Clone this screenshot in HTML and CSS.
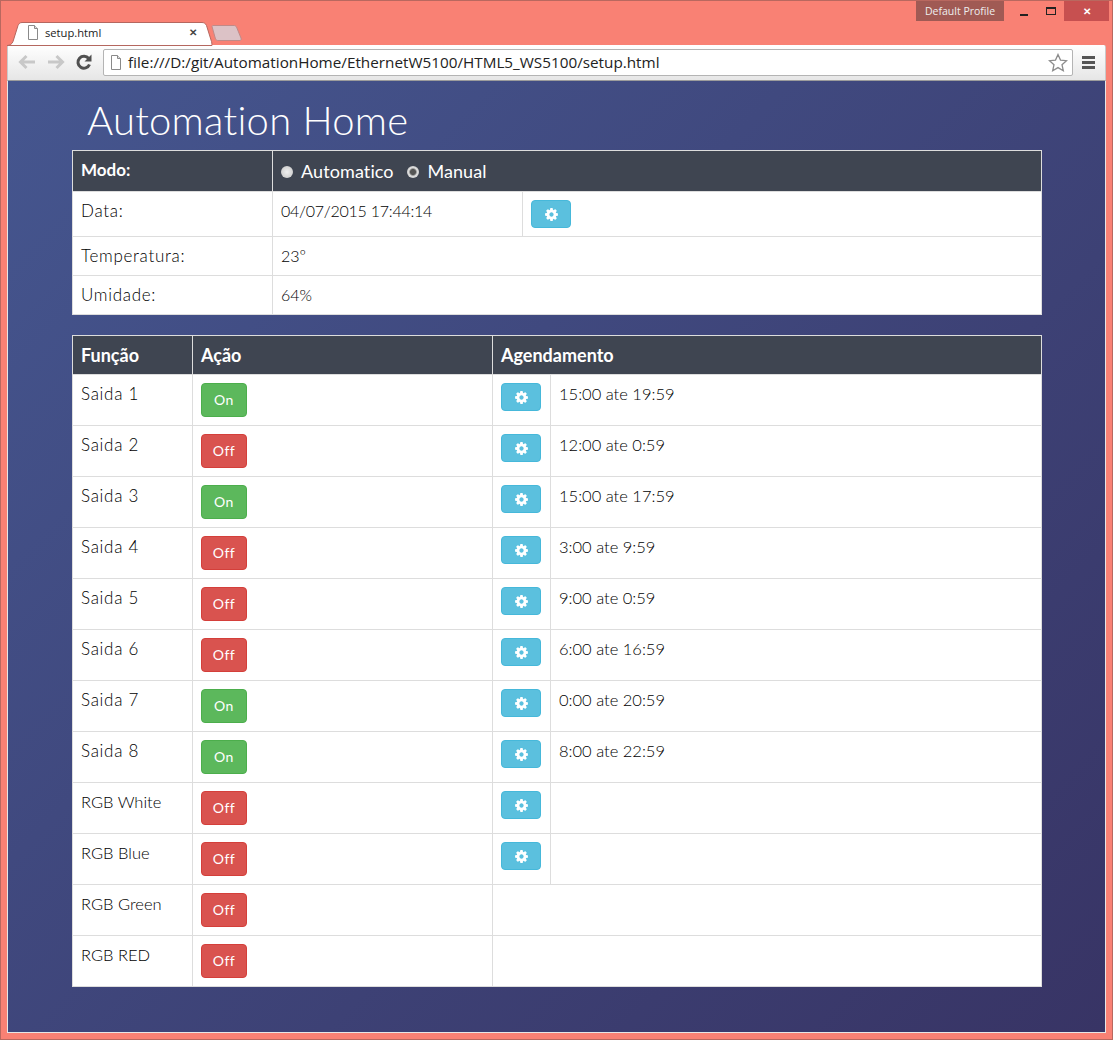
FILE: index.html
```html
<!DOCTYPE html>
<html lang="pt">
<head>
    <meta charset="UTF-8">
    <title>setup.html</title>
    <link rel="stylesheet" href="styles.css">
</head>
<body>
<svg class="defs" width="0" height="0">
    <symbol id="cog" viewBox="0 0 1792 1792">
        <path fill="currentColor" d="M1152 896q0-106-75-181t-181-75-181 75-75 181 75 181 181 75 181-75 75-181zm512-109v222q0 12-8 23t-20 13l-185 28q-19 54-39 91 35 50 107 138 10 12 10 25t-9 23q-27 37-99 108t-94 71q-12 0-26-9l-138-108q-44 23-91 38-16 136-29 186-7 28-36 28h-222q-14 0-24.5-8.5t-11.5-21.5l-28-184q-49-16-90-37l-141 107q-10 9-25 9-14 0-25-11-126-114-165-168-7-10-7-23 0-12 8-23 15-21 51-66.5t54-70.5q-27-50-41-99l-183-27q-13-2-21-12.5t-8-23.5v-222q0-12 8-23t19-13l186-28q14-46 39-92-40-57-107-138-10-12-10-24 0-10 9-23 26-36 98.5-107.5t94.5-71.5q13 0 26 10l138 107q44-23 91-38 16-136 29-186 7-28 36-28h222q14 0 24.5 8.5t11.5 21.5l28 184q49 16 90 37l142-107q9-9 24-9 13 0 25 10 129 119 165 170 7 8 7 22 0 12-8 23-15 21-51 66.5t-54 70.5q26 50 41 98l183 28q13 2 21 12.5t8 23.5z"/>
    </symbol>
    <symbol id="file" viewBox="0 0 12 15">
        <path fill="#fff" stroke="#8a8a8a" d="M1.5.5h6l3 3v11h-9z"/>
        <path fill="#e2e2e2" stroke="#8a8a8a" d="M7.5.5v3h3"/>
    </symbol>
</svg>
<div class="window">
    <div class="titlebar">
        <div class="tab">
            <svg class="tab-shape" width="206" height="26" viewBox="0 0 206 26">
                <path fill="#fff" stroke="#b5675f" d="M0 25.500c3 0 5-1.500 6-4l5-16c1-2 2-3 4-3h180c2 0 3.500 1 4.500 3l5 16c.5 2 .5 4 .5 4z"/>
            </svg>
            <svg class="tab-icon" width="12" height="15"><use href="#file"/></svg>
            <span class="tab-title">setup.html</span>
            <span class="tab-close">&#10005;</span>
        </div>
        <svg class="new-tab" width="32" height="16" viewBox="0 0 32 16">
            <path fill="#dcc2c6" stroke="#c08a88" d="M1 1.500c0-.5.500-1 1-1h21c1 0 2 .5 2.500 1.500l4.500 11c.5 1.500 0 2.500-1 2.500h-22c-1 0-2-.5-2.500-1.500z"/>
        </svg>
        <div class="spacer"></div>
        <div class="profile">Default Profile</div>
        <div class="controls">
            <span class="ctl ctl-min"><i></i></span>
            <span class="ctl ctl-max"><i></i></span>
            <span class="ctl ctl-close">&#10005;</span>
        </div>
    </div>

    <div class="toolbar">
        <svg class="nav" width="20" height="16" viewBox="0 0 20 16">
            <path fill="none" stroke="#c8c8c8" stroke-width="3" d="M18 8H4M9.500 2 3.500 8l6 6"/>
        </svg>
        <svg class="nav" width="20" height="16" viewBox="0 0 20 16">
            <path fill="none" stroke="#c8c8c8" stroke-width="3" d="M2 8h14M10.500 2l6 6-6 6"/>
        </svg>
        <svg class="nav reload" width="18" height="18" viewBox="0 0 18 18">
            <path fill="none" stroke="#505050" stroke-width="3" d="M14.500 11.500a6 6 0 1 1-.8-6"/>
            <path fill="#505050" d="M16.500 1.500v7h-7z"/>
        </svg>
        <div class="address">
            <svg class="addr-icon" width="12" height="15"><use href="#file"/></svg>
            <span class="url">file:///D:/git/AutomationHome/EthernetW5100/HTML5_WS5100/setup.html</span>
            <svg class="star" width="20" height="19" viewBox="0 0 20 19">
                <path fill="#fff" stroke="#8c8c8c" stroke-width="1.300" d="m10 1.500 2.500 5.600 6 .6-4.500 4 1.300 6L10 14.600l-5.300 3.100 1.300-6-4.500-4 6-.6z"/>
            </svg>
        </div>
        <div class="menu"><i></i><i></i><i></i></div>
    </div>

    <div class="page">
        <h1 class="title">Automation Home</h1>

        <table class="grid status">
            <colgroup><col class="c200"><col class="c250"><col></colgroup>
            <tr class="head">
                <th>Modo:</th>
                <td colspan="2" class="modes">
                    <span class="radio"></span><span class="mode">Automatico</span>
                    <span class="radio checked"></span><span class="mode">Manual</span>
                </td>
            </tr>
            <tr>
                <td>Data:</td>
                <td class="date">04/07/2015 17:44:14</td>
                <td><button class="btn info"><svg class="cog"><use href="#cog"/></svg></button></td>
            </tr>
            <tr>
                <td>Temperatura:</td>
                <td colspan="2">23º</td>
            </tr>
            <tr>
                <td>Umidade:</td>
                <td colspan="2">64%</td>
            </tr>
        </table>

        <table class="grid outputs">
            <colgroup><col class="c120"><col class="c300"><col class="c58"><col></colgroup>
            <tr class="head">
                <th>Função</th>
                <th>Ação</th>
                <th colspan="2">Agendamento</th>
            </tr>
            <tr>
                <td>Saida 1</td>
                <td><button class="btn on">On</button></td>
                <td><button class="btn info"><svg class="cog"><use href="#cog"/></svg></button></td>
                <td class="time">15:00 ate 19:59</td>
            </tr>
            <tr>
                <td>Saida 2</td>
                <td><button class="btn off">Off</button></td>
                <td><button class="btn info"><svg class="cog"><use href="#cog"/></svg></button></td>
                <td class="time">12:00 ate 0:59</td>
            </tr>
            <tr>
                <td>Saida 3</td>
                <td><button class="btn on">On</button></td>
                <td><button class="btn info"><svg class="cog"><use href="#cog"/></svg></button></td>
                <td class="time">15:00 ate 17:59</td>
            </tr>
            <tr>
                <td>Saida 4</td>
                <td><button class="btn off">Off</button></td>
                <td><button class="btn info"><svg class="cog"><use href="#cog"/></svg></button></td>
                <td class="time">3:00 ate 9:59</td>
            </tr>
            <tr>
                <td>Saida 5</td>
                <td><button class="btn off">Off</button></td>
                <td><button class="btn info"><svg class="cog"><use href="#cog"/></svg></button></td>
                <td class="time">9:00 ate 0:59</td>
            </tr>
            <tr>
                <td>Saida 6</td>
                <td><button class="btn off">Off</button></td>
                <td><button class="btn info"><svg class="cog"><use href="#cog"/></svg></button></td>
                <td class="time">6:00 ate 16:59</td>
            </tr>
            <tr>
                <td>Saida 7</td>
                <td><button class="btn on">On</button></td>
                <td><button class="btn info"><svg class="cog"><use href="#cog"/></svg></button></td>
                <td class="time">0:00 ate 20:59</td>
            </tr>
            <tr>
                <td>Saida 8</td>
                <td><button class="btn on">On</button></td>
                <td><button class="btn info"><svg class="cog"><use href="#cog"/></svg></button></td>
                <td class="time">8:00 ate 22:59</td>
            </tr>
            <tr>
                <td class="rgb">RGB White</td>
                <td><button class="btn off">Off</button></td>
                <td><button class="btn info"><svg class="cog"><use href="#cog"/></svg></button></td>
                <td></td>
            </tr>
            <tr>
                <td class="rgb">RGB Blue</td>
                <td><button class="btn off">Off</button></td>
                <td><button class="btn info"><svg class="cog"><use href="#cog"/></svg></button></td>
                <td></td>
            </tr>
            <tr>
                <td class="rgb">RGB Green</td>
                <td><button class="btn off">Off</button></td>
                <td colspan="2"></td>
            </tr>
            <tr>
                <td class="rgb">RGB RED</td>
                <td><button class="btn off">Off</button></td>
                <td colspan="2"></td>
            </tr>
        </table>
    </div>
</div>
</body>
</html>
```

FILE: styles.css
```css
* {
    box-sizing: border-box;
}

html, body {
    margin: 0;
    padding: 0;
}

.defs {
    display: block;
}

.window {
    height: 1040px;
    padding: 0 6px 6px;
    display: flex;
    flex-direction: column;
    background: #f98174;
    border: 1px solid #b9685f;
    font-family: "Open Sans", "Liberation Sans", sans-serif;
}

/* title bar */
.titlebar {
    height: 44px;
    display: flex;
    align-items: flex-start;
    flex: none;
}

.tab {
    width: 206px;
    height: 26px;
    margin-top: 19px;
    padding-left: 20px;
    position: relative;
    display: flex;
    align-items: center;
    flex: none;
}

.tab-shape {
    position: absolute;
    left: 0;
    top: 0;
}

.tab-icon {
    position: relative;
    top: -1px;
}

.tab-title {
    position: relative;
    top: -1px;
    margin-left: 6px;
    font-size: 11.200px;
    color: #222;
}

.tab-close {
    position: absolute;
    left: 182px;
    top: 5px;
    font-size: 10px;
    font-weight: bold;
    color: #444;
}

.new-tab {
    margin-top: 24px;
    margin-left: -2px;
    flex: none;
}

.spacer {
    flex: 1;
}

.profile {
    width: 88px;
    height: 20px;
    margin-right: 8px;
    background: #a05a54;
    color: #eee;
    font-size: 10.500px;
    line-height: 20px;
    text-align: center;
}

.controls {
    display: flex;
    margin-right: -3px;
}

.ctl {
    height: 20px;
    display: flex;
    align-items: center;
    justify-content: center;
}

.ctl-min {
    width: 26px;
}

.ctl-min i {
    width: 8px;
    height: 2px;
    margin-top: 7px;
    margin-right: 2px;
    background: #222;
}

.ctl-max {
    width: 26px;
}

.ctl-max i {
    width: 10px;
    height: 8px;
    border: 1px solid #222;
    border-top-width: 2px;
}

.ctl-close {
    width: 45px;
    background: #c75050;
    color: #fff;
    font-size: 10px;
    font-weight: bold;
}

/* toolbar */
.toolbar {
    height: 36px;
    flex: none;
    display: flex;
    align-items: center;
    padding: 0 10px 1px 9px;
    background: linear-gradient(#fff, #e6e6e6);
    border-bottom: 1px solid #9c9c9c;
    border-right: 1px solid #c9c9c9;
    border-left: 1px solid #c9c9c9;
    border-radius: 2px 2px 0 0;
}

.nav {
    margin-right: 9px;
    flex: none;
}

.reload {
    margin-right: 10px;
}

.address {
    flex: 1;
    height: 27px;
    padding: 0 4px 0 6px;
    display: flex;
    align-items: center;
    background: #fff;
    border: 1px solid #b4b4b4;
    border-radius: 2px;
}

.addr-icon {
    flex: none;
}

.url {
    flex: 1;
    margin-left: 6px;
    font-size: 15.280px;
    color: #222;
    white-space: nowrap;
}

.star {
    flex: none;
}

.menu {
    width: 13px;
    margin-left: 9px;
    display: flex;
    flex-direction: column;
    gap: 2px;
}

.menu i {
    height: 3px;
    background: #555;
}

/* page */
.page {
    flex: 1;
    padding: 19px 0 0 64px;
    background: linear-gradient(135deg, #45568f, #383465);
    border: 1px solid #e6e6e6;
    border-top: 0;
    font-family: Lato, "Liberation Sans", sans-serif;
}

.title {
    margin: 0 0 10px;
    padding-left: 15px;
    font-size: 40px;
    font-weight: 300;
    letter-spacing: .25px;
    line-height: 40px;
    color: #fff;
}

.grid {
    width: 970px;
    table-layout: fixed;
    border-collapse: collapse;
    background: #fff;
    font-size: 16px;
    font-weight: 300;
    line-height: 22px;
    color: #000;
}

.outputs {
    margin-top: 20px;
}

.c58 {
    width: 58px;
}

.c120 {
    width: 120px;
}

.c200 {
    width: 200px;
}

.c250 {
    width: 250px;
}

.c300 {
    width: 300px;
}

.grid td, .grid th {
    padding: 8px;
    border: 1px solid #ddd;
    text-align: left;
    vertical-align: top;
}

.grid td:first-child {
    font-size: 17px;
    letter-spacing: .7px;
}

.grid td.rgb {
    font-size: 16.500px;
    letter-spacing: 0;
}

.grid .date {
    letter-spacing: -.25px;
}

.grid .time {
    font-size: 16.500px;
}

.head {
    background: #3f4551;
    color: #fff;
}

.grid th {
    font-size: 17px;
    font-weight: bold;
}

.outputs th {
    font-size: 18px;
}

.grid .modes {
    height: 41px;
    font-weight: 400;
    font-size: 18px;
    letter-spacing: .1px;
    padding-top: 9px;
}

.radio {
    display: inline-block;
    width: 12px;
    height: 12px;
    margin-right: 8px;
    border-radius: 50%;
    background: radial-gradient(#f0f0f0, #c4c4c4);
}

.radio.checked {
    background: radial-gradient(#555 30%, #ddd 50%, #c4c4c4);
}

.mode {
    margin-right: 9px;
}

.btn {
    display: block;
    margin: 0;
    padding: 0;
    border: 1px solid;
    border-radius: 4px;
    color: #fff;
    font-family: Lato, "Liberation Sans", sans-serif;
    font-size: 14px;
    letter-spacing: .5px;
}

.on, .off {
    width: 46px;
    height: 34px;
    padding-bottom: 2px;
}

.on {
    background: #5cb85c;
    border-color: #4cae4c;
}

.off {
    background: #d9534f;
    border-color: #d43f3a;
}

.info {
    width: 40px;
    height: 28px;
    background: #5bc0de;
    border-color: #46b8da;
    display: flex;
    align-items: center;
    justify-content: center;
}

.cog {
    width: 15px;
    height: 15px;
}
```
